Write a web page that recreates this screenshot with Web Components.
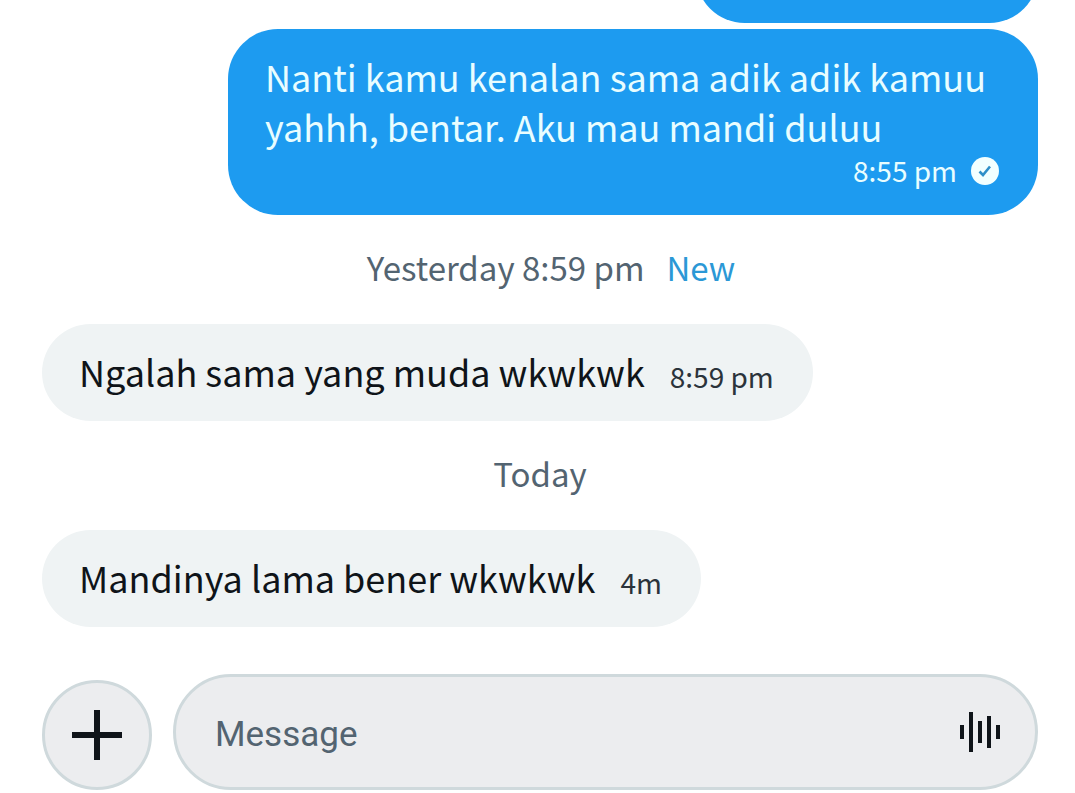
<!DOCTYPE html>
<html lang="id">
<head>
  <meta charset="UTF-8">
  <meta name="viewport" content="width=device-width, initial-scale=1">
  <title>Messages</title>
  <style>
    body {
      margin: 0;
      background: #fff;
      font-family: "Noto Sans CJK JP", "Noto Sans", sans-serif;
      color: #0f1419;
    }
  </style>
</head>
<body>
  <dm-screen>
    <dm-bubble class="earlier" side="out"></dm-bubble>
    <dm-bubble side="out" time="8:55 pm" sent>Nanti kamu kenalan sama adik adik kamuu yahhh, bentar. Aku mau mandi duluu</dm-bubble>
    <dm-separator unread>Yesterday 8:59 pm</dm-separator>
    <dm-bubble side="in" time="8:59 pm">Ngalah sama yang muda wkwkwk</dm-bubble>
    <dm-separator>Today</dm-separator>
    <dm-bubble side="in" time="4m">Mandinya lama bener wkwkwk</dm-bubble>
    <dm-composer slot="footer"></dm-composer>
  </dm-screen>

  <script>
    class DmScreen extends HTMLElement {
      constructor() {
        super();
        this.attachShadow({ mode: 'open' });
      }

      connectedCallback() {
        this.shadowRoot.innerHTML = `
          <style>
            :host {
              display: flex;
              flex-direction: column;
              height: 100vh;
              box-sizing: border-box;
              padding: 0 37px 3px 42px;
              overflow: hidden;
            }

            /* newest message stays at the bottom, older ones run off the top */
            main {
              flex: 1;
              min-height: 0;
              display: flex;
              flex-direction: column;
              justify-content: flex-end;
            }

            footer {
              flex: none;
              margin-top: 47px;
            }

            ::slotted(*) {
              flex: none;
            }

            ::slotted(.earlier) {
              min-width: 342px;
              min-height: 97px;
              margin-bottom: 6px;
            }
          </style>
          <main><slot></slot></main>
          <footer><slot name="footer"></slot></footer>
        `;
      }
    }

    class DmBubble extends HTMLElement {
      constructor() {
        super();
        this.attachShadow({ mode: 'open' });
      }

      connectedCallback() {
        const time = this.getAttribute('time');
        const check = `
          <svg viewBox="0 0 28 28" role="img" aria-label="Sent">
            <circle cx="14" cy="14" r="14" fill="#f2ffff"/>
            <path d="M8.5 14.5l3.5 3.5 7-8.5" fill="none" stroke="#2f8fc8" stroke-width="2.6"/>
          </svg>`;

        this.shadowRoot.innerHTML = `
          <style>
            :host {
              display: flex;
              box-sizing: border-box;
              max-width: 810px;
              padding: 22px 39px 25px 37px;
              border-radius: 50px;
              font-size: 36px;
              line-height: 50px;
            }

            :host([side="in"]) {
              align-self: flex-start;
              align-items: flex-end;
              gap: 25px;
              background: #eff3f4;
            }

            :host([side="out"]) {
              align-self: flex-end;
              flex-direction: column;
              background: #1d9bf0;
              color: #e8fdff;
            }

            .meta {
              display: flex;
              align-items: center;
              justify-content: flex-end;
              gap: 14px;
              font-size: 28px;
              line-height: 39px;
            }

            :host([side="in"]) .meta {
              color: #2b333b;
            }

            svg {
              width: 28px;
              height: 28px;
            }
          </style>
          <div><slot></slot></div>
          ${time ? `<div class="meta"><time>${time}</time>${this.hasAttribute('sent') ? check : ''}</div>` : ''}
        `;
      }
    }

    class DmSeparator extends HTMLElement {
      constructor() {
        super();
        this.attachShadow({ mode: 'open' });
      }

      connectedCallback() {
        this.shadowRoot.innerHTML = `
          <style>
            :host {
              display: flex;
              align-items: center;
              justify-content: center;
              gap: 22px;
              box-sizing: border-box;
              height: 109px;
              padding-bottom: 6px;
              font-size: 33px;
              color: #536471;
            }

            :host([unread]) {
              padding-left: 22px;
            }

            .new {
              color: #2b98d6;
            }
          </style>
          <span><slot></slot></span>
          ${this.hasAttribute('unread') ? '<span class="new">New</span>' : ''}
        `;
      }
    }

    class DmComposer extends HTMLElement {
      constructor() {
        super();
        this.attachShadow({ mode: 'open' });
      }

      connectedCallback() {
        this.shadowRoot.innerHTML = `
          <style>
            :host {
              display: flex;
              align-items: flex-end;
              gap: 21px;
            }

            button {
              flex: none;
              display: flex;
              align-items: center;
              justify-content: center;
              padding: 0;
              border: none;
              background: none;
              color: #0f1419;
              cursor: pointer;
            }

            .add {
              box-sizing: border-box;
              width: 110px;
              height: 110px;
              border: 3px solid #cfd9dc;
              border-radius: 50%;
              background: #ecedef;
            }

            .field {
              flex: 1;
              display: flex;
              align-items: center;
              box-sizing: border-box;
              height: 116px;
              padding: 0 34px 0 39px;
              border: 3px solid #cfd9dc;
              border-radius: 58px;
              background: #ecedef;
            }

            input {
              flex: 1;
              min-width: 0;
              padding: 5px 0 0;
              border: none;
              outline: none;
              background: none;
              font-family: Roboto, sans-serif;
              font-size: 35px;
              line-height: 50px;
              color: inherit;
            }

            input::placeholder {
              color: #536471;
              opacity: 1;
            }
          </style>
          <button class="add" type="button" aria-label="Add">
            <svg width="50" height="50" viewBox="0 0 50 50" fill="currentColor">
              <path d="M22 0h6v22h22v6H28v22h-6V28H0v-6h22z"/>
            </svg>
          </button>
          <div class="field">
            <input type="text" placeholder="Message" aria-label="Message">
            <button type="button" aria-label="Voice message">
              <svg width="42" height="42" viewBox="0 0 42 42" fill="currentColor">
                <path d="M1 14h4v14H1zM10 1h4v40h-4zM19 10h4v22h-4zM28 5h4v32h-4zM37 14h4v14h-4z"/>
              </svg>
            </button>
          </div>
        `;
      }
    }

    customElements.define('dm-screen', DmScreen);
    customElements.define('dm-bubble', DmBubble);
    customElements.define('dm-separator', DmSeparator);
    customElements.define('dm-composer', DmComposer);
  </script>
</body>
</html>
